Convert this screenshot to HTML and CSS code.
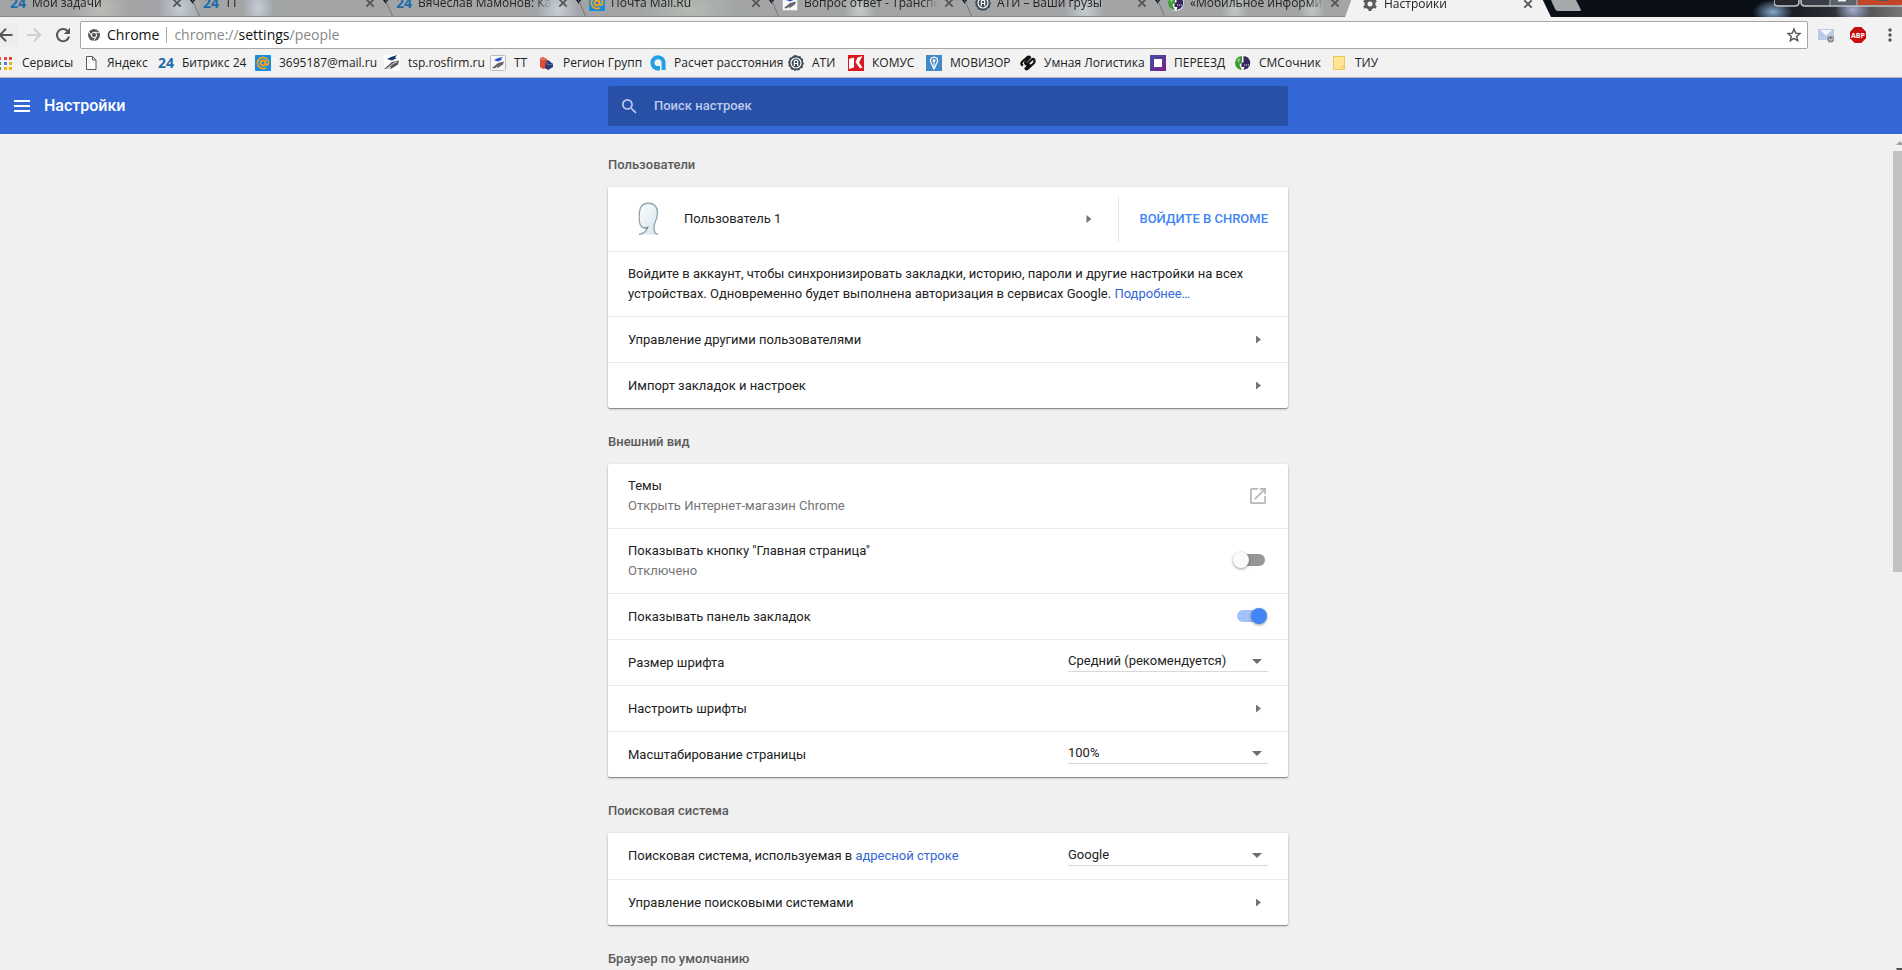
FILE: index.html
```html
<!DOCTYPE html>
<html lang="ru">
<head>
<meta charset="utf-8">
<title>Настройки</title>
<link rel="stylesheet" href="styles.css">
</head>
<body>
<svg class="defs" aria-hidden="true">
  <defs>
    <linearGradient id="g-blue" x1="0" y1="0" x2="1" y2="1"><stop offset="0" stop-color="#3f51a5"/><stop offset="1" stop-color="#7b1f8c"/></linearGradient>
    <linearGradient id="g-hair" x1="0" y1="0" x2="1" y2="1"><stop offset="0" stop-color="#ffffff"/><stop offset="1" stop-color="#d3e2ec"/></linearGradient>
    <symbol id="i-mail" viewBox="0 0 16 16"><rect width="16" height="16" rx="1" fill="#168de2"/><circle cx="8" cy="8" r="2.500" fill="none" stroke="#f8a31b" stroke-width="1.800"/><path d="M10.500 5.600v3.200c0 2 3.100 1.700 3.100-.8A5.600 5.600 0 1 0 11 12.700" fill="none" stroke="#f8a31b" stroke-width="1.700"/></symbol>
    <symbol id="i-road" viewBox="0 0 16 16"><rect width="16" height="16" fill="#fff"/><path d="M3 4l4-2 6-2-2 2.500 2 .5-5 2.500-2-.5z" fill="#153a76"/><path d="M0 14l8-7 7-1.500-1 4-8 5 1-3-4 2.500z" fill="#555"/><path d="M2 14l8-6 3-1" stroke="#fff" fill="none" stroke-width=".8"/></symbol>
    <symbol id="i-roadbox" viewBox="0 0 16 16"><rect x=".5" y=".5" width="15" height="15" rx="1" fill="#f8f8f8" stroke="#bbb"/><path d="M4 5l4-2 5-1-2 2 1 .8-4 1.700-1.500-.5z" fill="#2456cf"/><path d="M2 13l6-5 6-1.500-1 3-6 4 .5-2-3 2z" fill="#666"/></symbol>
    <symbol id="i-ati" viewBox="0 0 16 16"><path d="M8 0l2 1.200 2.300-.2.900 2.100 2 1.200-.4 2.300L16 8.500l-1.200 2-.1 2.300-2.300.7L11 15.400l-2.200-.3L7 16l-1.700-1.300L3 14.500l-.7-2.200L.5 11l.3-2.300L0 7l1.300-1.800.2-2.300 2.200-.7L5.500.5z" fill="#3c4a56"/><circle cx="8" cy="8" r="5" fill="none" stroke="#fff" stroke-width="1.200"/><path d="M6.300 11V6.800a1.700 1.700 0 0 1 3.400 0V11M6 8.500h4" fill="none" stroke="#fff" stroke-width="1.200"/></symbol>
    <symbol id="i-sms" viewBox="0 0 16 16"><circle cx="8" cy="8" r="7.800" fill="#fff"/><path d="M7 1A7 7 0 0 0 7 15L4.500 10 7 7z" fill="#3e9b35"/><path d="M2 5l3-2-1 5z" fill="#9fd08b"/><path d="M8.500 1a7 7 0 0 1 4 12.500L8.500 15l1-3h-3V7.500h2z" fill="#35265f"/><path d="M9 10h1.200M11 10h1.200M13 10h1" stroke="#fff"/></symbol>
    <symbol id="i-close" viewBox="0 0 10 10"><path d="M1.300 1.300l7.400 7.400M8.700 1.300L1.300 8.700" stroke="#555" stroke-width="1.800"/></symbol>
    <symbol id="i-edge" viewBox="0 0 14 17"><path d="M2 0l3 4 2-4z" fill="#0b1018"/><path d="M4.500 0l7 16" stroke="#777" fill="none"/></symbol>
  </defs>
</svg>

<div class="app">
  <div class="tabstrip">
    <button class="tab"><span class="b24">24</span><span class="tab-title">Мои задачи</span><svg class="tab-x"><use href="#i-close"/></svg><svg class="tab-edge"><use href="#i-edge"/></svg></button>
    <button class="tab"><span class="b24">24</span><span class="tab-title">ТТ</span><svg class="tab-x"><use href="#i-close"/></svg><svg class="tab-edge"><use href="#i-edge"/></svg></button>
    <button class="tab"><span class="b24">24</span><span class="tab-title">Вячеслав Мамонов: Календарь</span><svg class="tab-x"><use href="#i-close"/></svg><svg class="tab-edge"><use href="#i-edge"/></svg></button>
    <button class="tab"><svg class="fav"><use href="#i-mail"/></svg><span class="tab-title">Почта Mail.Ru</span><svg class="tab-x"><use href="#i-close"/></svg><svg class="tab-edge"><use href="#i-edge"/></svg></button>
    <button class="tab"><svg class="fav"><use href="#i-roadbox"/></svg><span class="tab-title">Вопрос ответ - Транспортная</span><svg class="tab-x"><use href="#i-close"/></svg><svg class="tab-edge"><use href="#i-edge"/></svg></button>
    <button class="tab"><svg class="fav"><use href="#i-ati"/></svg><span class="tab-title">АТИ – Ваши грузы</span><svg class="tab-x"><use href="#i-close"/></svg><svg class="tab-edge"><use href="#i-edge"/></svg></button>
    <button class="tab"><svg class="fav"><use href="#i-sms"/></svg><span class="tab-title">«Мобильное информирование</span><svg class="tab-x"><use href="#i-close"/></svg></button>
    <button class="tab tab-active"><svg class="fav" viewBox="0 0 16 16"><g fill="none" stroke="#5a5a5a"><circle cx="8" cy="8" r="4" stroke-width="3"/><path d="M8 1v3M8 12v3M1.900 4.500l2.600 1.500M11.500 10l2.600 1.500M1.900 11.500l2.600-1.500M11.500 6l2.600-1.500" stroke-width="3"/></g></svg><span class="tab-title">Настройки</span><svg class="tab-x"><use href="#i-close"/></svg></button>
    <div class="glass">
      <svg class="newtab" viewBox="0 0 40 17" role="img" aria-label="Новая вкладка"><path d="M0 0h25l5 10q0 1-1 1H7q-2 0-3-2z" fill="#a6a8ab"/></svg>
      <svg class="winbtns" viewBox="0 0 128 17" role="img" aria-label="Управление окном"><path d="M0 0v2q0 4 4 4h17q4 0 4-4V0" fill="#24272b" stroke="#c5c7ca" stroke-width="1.500"/><path d="M27 0v2q0 4 4 4h97V0" fill="#3a3d47" stroke="#c5c7ca" stroke-width="1.500"/><path d="M57 0h26v5H57z" fill="#59636b"/><path d="M84 0h44v5H84z" fill="#c2452a"/><path d="M56 0v6M83 0v6" stroke="#c5c7ca"/><path d="M64 0h8v1.500h-8z" fill="#eee"/><path d="M104 0h10v1h-10z" fill="#555"/></svg>
    </div>
  </div>

  <div class="toolbar">
    <button class="tool tool-back" aria-label="Назад"><svg width="16" height="16" viewBox="0 0 16 16"><path d="M15.500 8H3M9 1.800L2.800 8 9 14.200" fill="none" stroke="#555" stroke-width="2"/></svg></button>
    <button class="tool" aria-label="Вперёд"><svg width="16" height="16" viewBox="0 0 16 16"><path d="M1 8h13M8 1.800L14.200 8 8 14.200" fill="none" stroke="#cfcfcf" stroke-width="2"/></svg></button>
    <button class="tool" aria-label="Обновить"><svg width="16" height="16" viewBox="0 0 16 16"><path d="M12.600 4A6.100 6.100 0 1 0 14 9.500" fill="none" stroke="#555" stroke-width="2"/><path d="M15 .8v6.200H8.800z" fill="#555"/></svg></button>
    <div class="omnibox">
      <svg width="12" height="12" viewBox="0 0 12 12"><circle cx="6" cy="6" r="6" fill="#5a5a5a"/><circle cx="6" cy="6" r="2.600" fill="#5a5a5a" stroke="#fff"/><path d="M6 3.400h5.300M3.700 7.300L1.200 3M8.300 7.300L5.700 11.800" stroke="#fff" stroke-width=".9"/></svg>
      <span class="origin">Chrome</span>
      <span class="url">chrome://<b>settings</b>/people</span>
      <button class="bare star" aria-label="Добавить в закладки"><svg width="16" height="16" viewBox="0 0 16 16"><path d="M8 2l1.700 4.100 4.300.4-3.300 2.900 1 4.300L8 11.400l-3.700 2.300 1-4.300L2 6.500l4.300-.4z" fill="none" stroke="#555" stroke-width="1.400"/></svg></button>
    </div>
    <button class="bare" aria-label="Почта"><svg width="16" height="16" viewBox="0 0 16 16"><path d="M0 2h16v11H0z" fill="#bccae6"/><path d="M2 3h12L8 8.500z" fill="#f3f6fc"/><circle cx="12.700" cy="12.300" r="3.300" fill="#84878d"/><path d="M11 12l1.500 1.500L15 11.500" stroke="#eee" fill="none"/></svg></button>
    <button class="bare abp" aria-label="Adblock Plus"><svg width="16" height="16" viewBox="0 0 16 16"><path d="M4.700 0h6.600L16 4.700v6.600L11.300 16H4.700L0 11.300V4.700z" fill="#c70d0d"/><text x="8" y="11" text-anchor="middle" class="abp-text">ABP</text></svg></button>
    <button class="bare" aria-label="Меню"><svg width="4" height="14" viewBox="0 0 4 14"><g fill="#555"><circle cx="2" cy="2" r="1.700"/><circle cx="2" cy="7" r="1.700"/><circle cx="2" cy="12" r="1.700"/></g></svg></button>
  </div>

  <nav class="bookmarks">
    <a href="#"><svg class="fav" viewBox="0 0 16 16"><path d="M2 2h1v3H2zM6 2h3v3H6zM11 2h3v3h-3z" fill="#e8453c"/><path d="M2 7h1v3H2z" fill="#3a9a55"/><path d="M6 7h3v3H6z" fill="#3f83f1"/><path d="M11 7h3v3h-3z" fill="#f4b400"/><path d="M2 12h1v3H2z" fill="#3a9a55"/><path d="M6 12h3v3H6zM11 12h3v3h-3z" fill="#f4b400"/></svg>Сервисы</a>
    <a href="#"><svg class="fav" viewBox="0 0 16 16"><path d="M3.500 1.500h6l3.500 3.500v9.500H3.500zM9.500 1.500V5H13" fill="#fff" stroke="#5a5a5a"/></svg>Яндекс</a>
    <a href="#"><span class="b24">24</span>Битрикс 24</a>
    <a href="#"><svg class="fav"><use href="#i-mail"/></svg>3695187@mail.ru</a>
    <a href="#"><svg class="fav"><use href="#i-road"/></svg>tsp.rosfirm.ru</a>
    <a href="#"><svg class="fav"><use href="#i-roadbox"/></svg>ТТ</a>
    <a href="#"><svg class="fav" viewBox="0 0 16 16"><path d="M1 3l3-1 4 2v9l-4 1-3-2z" fill="#de4b36"/><path d="M1 3l3 1.500L8 4" stroke="#f08a78" fill="none"/><path d="M7 6l2-1 5 4v3l-5 3-3-2z" fill="#263a70"/><path d="M7 6l2 4 5-1" stroke="#6576a5" fill="none"/></svg>Регион Групп</a>
    <a href="#"><svg class="fav" viewBox="0 0 16 16"><path d="M8 13.400A5.600 5.600 0 1 1 13.600 8v7" fill="none" stroke="#21a0e3" stroke-width="4"/><path d="M7 11h3v4.500H7z" fill="#21a0e3"/></svg>Расчет расстояния</a>
    <a href="#"><svg class="fav"><use href="#i-ati"/></svg>АТИ</a>
    <a href="#"><svg class="fav" viewBox="0 0 16 16"><path d="M0 0h16v16H0z" fill="#dd1720"/><path d="M1 4l5-1.500v10L1 14zM7.500 7l2-4.500L14.500 1l-3.500 6.500 3.500 5-2.500 1-3.500-5z" fill="#fff"/></svg>КОМУС</a>
    <a href="#"><svg class="fav" viewBox="0 0 16 16"><path d="M0 0h16v16H0z" fill="#4189c7"/><path d="M8 14L4.500 6.500a3.600 3.600 0 1 1 7 0z" fill="none" stroke="#fff" stroke-width="1.200"/><circle cx="8" cy="5.500" r="1.500" fill="#fff"/><path d="M8 7v5" stroke="#fff"/></svg>МОВИЗОР</a>
    <a href="#"><svg class="fav" viewBox="0 0 16 16"><path d="M3 10.500Q0 9 2.500 6.500L7 2.500Q9 1 10 2.500L5.500 7Q4.500 8.500 6.500 9.500L12 4.500Q14 3 14.500 5.500Q15 7 13 9L8 13.500Q6 15 5.500 13.500L10 9" fill="none" stroke="#111" stroke-width="2.300" stroke-linejoin="round"/></svg>Умная Логистика</a>
    <a href="#"><svg class="fav" viewBox="0 0 16 16"><path d="M0 0h16v16H0z" fill="url(#g-blue)"/><path d="M4 4h8v8H4z" fill="#fff"/></svg>ПЕРЕЕЗД</a>
    <a href="#"><svg class="fav"><use href="#i-sms"/></svg>СМСочник</a>
    <a href="#"><svg class="fav" viewBox="0 0 16 16"><path d="M2.500 1.500h11v13h-11z" fill="#ffe594" stroke="#f0c851"/><path d="M11.500 10.500h2v4h-2z" fill="#ffe594" stroke="#f0c851"/></svg>ТИУ</a>
  </nav>

  <header class="header">
    <div class="brand">
      <button class="bare" aria-label="Главное меню"><svg width="16" height="12" viewBox="0 0 16 12"><path d="M0 0h16v2H0zM0 5h16v2H0zM0 10h16v2H0z" fill="#fff"/></svg></button>
      <h1>Настройки</h1>
    </div>
    <label class="search">
      <svg width="15" height="15" viewBox="3 3 18 18"><path d="M15.500 14h-.79l-.28-.27A6.470 6.470 0 0 0 16 9.500 6.500 6.500 0 1 0 9.500 16c1.610 0 3.090-.59 4.230-1.570l.27.28v.79l5 4.990L20.490 19l-4.990-5zm-6 0C7.010 14 5 11.990 5 9.500S7.010 5 9.500 5 14 7.010 14 9.500 11.990 14 9.500 14z" fill="#bccbec"/></svg>
      <input type="search" placeholder="Поиск настроек" aria-label="Поиск настроек">
    </label>
  </header>

  <div class="body">
    <main class="content">
      <section>
        <h2>Пользователи</h2>
        <div class="card">
          <div class="row row-tall">
            <button class="profile">
              <svg class="avatar" viewBox="0 0 40 40"><path d="M11 35.500c4-1 8-2.500 7.500-6.500-4 .5-6.500-2-7-6C10.800 16 11 10 14 6.500c3-3 10-3 13 0 3 3.500 3 8 1.500 13-1.500 4-2.500 6-2.500 9.500 0 3.500 1.500 6 4 6.500" fill="url(#g-hair)" stroke="#8fa3b1" stroke-width="1.300"/><path d="M13 26.500c2 2.500 5 2.500 8 .5l-3 6c1-2 1-3 .5-4-2 .3-4-.7-5.500-2.500z" fill="#6f8796"/></svg>
              <span class="label">Пользователь 1</span>
              <span class="arrow"></span>
            </button>
            <button class="signin">ВОЙДИТЕ В CHROME</button>
          </div>
          <div class="row row-tall">
            <p>Войдите в аккаунт, чтобы синхронизировать закладки, историю, пароли и другие настройки на всех устройствах. Одновременно будет выполнена авторизация в сервисах Google. <a href="#">Подробнее…</a></p>
          </div>
          <button class="row"><span class="label">Управление другими пользователями</span><span class="arrow"></span></button>
          <button class="row"><span class="label">Импорт закладок и настроек</span><span class="arrow"></span></button>
        </div>
      </section>

      <section>
        <h2>Внешний вид</h2>
        <div class="card">
          <button class="row row-tall"><span class="label">Темы<small>Открыть Интернет-магазин Chrome</small></span>
            <svg class="open" width="16" height="16" viewBox="3 3 18 18"><path d="M19 19H5V5h7V3H5a2 2 0 0 0-2 2v14a2 2 0 0 0 2 2h14c1.100 0 2-.9 2-2v-7h-2v7zM14 3v2h3.590l-9.830 9.830 1.410 1.410L19 6.410V10h2V3h-7z" fill="#b8b8b8"/></svg></button>
          <label class="row row-tall"><span class="label">Показывать кнопку "Главная страница"<small>Отключено</small></span><input type="checkbox" class="toggle"></label>
          <label class="row"><span class="label">Показывать панель закладок</span><input type="checkbox" class="toggle" checked></label>
          <div class="row"><label class="label" for="font-size">Размер шрифта</label><span class="select"><select id="font-size"><option>Средний (рекомендуется)</option></select></span></div>
          <button class="row"><span class="label">Настроить шрифты</span><span class="arrow"></span></button>
          <div class="row"><label class="label" for="zoom">Масштабирование страницы</label><span class="select"><select id="zoom"><option>100%</option></select></span></div>
        </div>
      </section>

      <section>
        <h2>Поисковая система</h2>
        <div class="card">
          <div class="row row-select"><label class="label" for="engine">Поисковая система, используемая в <a href="#">адресной строке</a></label><span class="select"><select id="engine"><option>Google</option></select></span></div>
          <button class="row"><span class="label">Управление поисковыми системами</span><span class="arrow"></span></button>
        </div>
      </section>

      <section>
        <h2>Браузер по умолчанию</h2>
      </section>
    </main>
    <div class="scrollbar" aria-hidden="true">
      <svg class="sb-arrow" viewBox="0 0 9 17"><path d="M3 11l4-4 4 4z" fill="#a3a3a3"/></svg>
      <div class="sb-thumb"></div>
      <div class="sb-rest"></div>
      <svg class="sb-arrow" viewBox="0 0 9 17"><path d="M3 15h6v2H4z" fill="#505050"/></svg>
    </div>
  </div>
</div>
</body>
</html>
```
FILE: styles.css
```css
* { box-sizing: border-box; }
body {
  margin: 0;
  font: 13px/20px Roboto, "Liberation Sans", sans-serif;
  color: #222;
  background: #f0f0f0;
}
button { font: inherit; color: inherit; border: 0; padding: 0; background: none; text-align: left; }
svg { display: block; flex: none; }
a { color: #3367d6; text-decoration: none; }
h1, h2, p { margin: 0; }
.defs { position: absolute; width: 0; height: 0; }
.app { display: flex; flex-direction: column; height: 100vh; overflow: hidden; }
.fav { width: 16px; height: 16px; }
.b24 { flex: none; width: 16px; font: bold 14px/16px "Open Sans", sans-serif; color: #1d6cab; }

/* tab strip, cut by the top of the screen */
.tabstrip {
  display: flex;
  flex: none;
  align-items: flex-end;
  height: 17px;
  overflow: hidden;
  background:
    radial-gradient(ellipse 22px 26px at 180px 8px, #c3ccd6, transparent),
    radial-gradient(ellipse 16px 26px at 258px 8px, #c3ccd6, transparent),
    radial-gradient(ellipse 30px 26px at 100px 10px, #bcbdb8, transparent),
    radial-gradient(ellipse 22px 26px at 558px 10px, #c6ced8, transparent),
    radial-gradient(ellipse 50px 26px at 690px 10px, #b3bbb2, transparent),
    radial-gradient(ellipse 16px 26px at 860px 10px, #c3cbc6, transparent),
    radial-gradient(ellipse 20px 26px at 1085px 10px, #c3cbcf, transparent),
    radial-gradient(ellipse 14px 26px at 1235px 10px, #c0c6c3, transparent),
    radial-gradient(ellipse 14px 26px at 1312px 10px, #c0c6c3, transparent),
    #a2a4a6;
}
.tab {
  position: relative;
  display: flex;
  flex: 0 1 193px;
  align-items: center;
  gap: 6px;
  min-width: 0;
  height: 27px;
  padding: 0 11px 0 10px;
  border-bottom: 1px solid #888;
  font: 12px/16px "Open Sans", sans-serif;
}
.tab-title {
  flex: 1;
  overflow: hidden;
  white-space: nowrap;
  color: #222;
  mask-image: linear-gradient(to left, transparent, #000 16px);
}
.tab-x { width: 10px; height: 10px; }
.tab-edge { position: absolute; right: -9px; bottom: -1px; width: 14px; height: 17px; }
.tab-active {
  z-index: 1;
  flex: 0 1 206px;
  margin-left: -6px;
  padding: 0 18px 0 17px;
  border-bottom: 0;
  background: #f2f2f2;
  clip-path: polygon(5px 0, 193px 0, 206px 100%, 0 100%, 6px 40%);
}
.glass {
  display: flex;
  flex: 1;
  justify-content: space-between;
  height: 17px;
  margin-left: -10px;
  background:
    radial-gradient(ellipse 20px 12px at 232px 12px, #86a9cc, transparent),
    radial-gradient(ellipse 18px 14px at 312px 10px, #a3aed4, transparent),
    linear-gradient(to right, #0b1018 60%, #2a2e33 80%, #777);
}
.newtab { width: 40px; height: 17px; margin-left: 10px; }
.winbtns { width: 128px; height: 17px; }

/* toolbar */
.toolbar { display: flex; flex: none; align-items: center; height: 36px; padding-right: 10px; background: #f2f2f2; }
.bare { display: flex; }
.tool { display: flex; align-items: center; justify-content: center; width: 29px; height: 24px; }
.tool-back { justify-content: flex-end; width: 18px; padding-right: 5px; margin-right: 1px; background: #ededed; border-radius: 2px; }
.omnibox {
  display: flex;
  flex: 1;
  align-items: center;
  height: 28px;
  margin: 0 10px 0 3px;
  padding: 0 5px 0 7px;
  border: 1px solid #a6a6a6;
  border-radius: 2px;
  background: #fff;
  font: 14px/20px "Open Sans", sans-serif;
}
.origin { margin-left: 7px; padding-right: 7px; border-right: 1px solid #aaa; line-height: 16px; color: #111; }
.url { margin-left: 7px; color: #888; }
.url b { font-weight: normal; color: #111; }
.star { margin-left: auto; }
.abp { margin: 0 22px 0 16px; }
.abp-text { font: bold 7px "Open Sans", sans-serif; fill: #fff; }

/* bookmarks bar */
.bookmarks {
  display: grid;
  flex: none;
  grid-template-columns: 85px 75px 97px 129px 106px 49px 111px 138px 60px 78px 94px 130px 85px 96px 60px;
  align-items: center;
  height: 25px;
  padding-bottom: 4px;
  border-bottom: 1px solid #b5b5b5;
  background: #f2f2f2;
}
.bookmarks a { display: flex; gap: 8px; margin-left: -2px; font: 12px/16px "Open Sans", sans-serif; color: #222; white-space: nowrap; }

/* settings header */
.header {
  display: grid;
  flex: none;
  grid-template-columns: 1fr minmax(0, 680px) 1fr;
  align-items: center;
  height: 56px;
  padding-right: 6px;
  background: #3367d6;
}
.brand { display: flex; align-items: center; gap: 14px; padding-left: 14px; }
.brand h1 { font-size: 16px; font-weight: 500; color: #fff; }
.search { display: flex; align-items: center; gap: 17px; height: 40px; padding: 0 14px; border-radius: 2px; background: #2850a7; }
.search input { flex: 1; padding: 0; border: 0; outline: 0; background: none; font: 500 13px/20px Roboto, sans-serif; color: #fff; appearance: none; }
.search input::placeholder { color: #bccbec; opacity: 1; }

/* settings page */
.body { display: flex; flex: 1; min-height: 0; }
.content { flex: 1; padding: 0 0 24px 3px; overflow-y: auto; scrollbar-width: none; }
section { width: 100%; max-width: 680px; margin: 0 auto; }
h2 { padding: 24px 0 12px; font-size: 13px; font-weight: 500; line-height: 20px; color: #5a5a5a; }
section:first-child h2 { padding-top: 21px; }
.card { display: flow-root; border-radius: 2px; background: #fff; box-shadow: 0 1px 1px rgba(0, 0, 0, .35), 0 1px 3px rgba(0, 0, 0, .2); }
.row { display: flex; align-items: center; width: 100%; min-height: 46px; padding: 0 20px; border-top: 1px solid #ebebeb; }
.row-tall { min-height: 65px; }
.row-select { min-height: 47px; }
.row:first-child { border-top-color: transparent; margin-top: -1px; }
.label { flex: 1; }
.label small { display: block; font-size: 13px; color: #757575; }
.arrow { width: 5px; height: 8px; margin-right: 7px; background: #757575; clip-path: polygon(0 0, 100% 50%, 0 100%); }
.profile { display: flex; flex: 1; align-items: center; height: 46px; border-right: 1px solid #e4e4e4; padding-right: 20px; }
.avatar { width: 40px; height: 40px; margin-right: 16px; }
.signin { padding-left: 20px; font-weight: 500; color: #4285f4; }
.open { margin-right: 2px; }
.select { position: relative; width: 200px; margin-bottom: 3px; }
.row-select .select { margin-bottom: 2px; }
.select::after {
  content: "";
  position: absolute;
  right: 6px;
  top: 9px;
  width: 10px;
  height: 5px;
  background: #6e6e6e;
  clip-path: polygon(0 0, 100% 0, 50% 100%);
  pointer-events: none;
}
.select select {
  display: block;
  width: 100%;
  height: 22px;
  padding: 0 24px 0 0;
  border: 0;
  border-bottom: 1px solid #d9d9d9;
  border-radius: 0;
  outline: 0;
  appearance: none;
  background: none;
  font: inherit;
  color: inherit;
}
.toggle { position: relative; width: 28px; height: 12px; margin: 0 3px 2px 0; border-radius: 6px; appearance: none; background: #969696; }
.toggle::before {
  content: "";
  position: absolute;
  left: -4px;
  top: -2px;
  width: 16px;
  height: 16px;
  border-radius: 50%;
  background: #fafafa;
  box-shadow: 0 1px 3px rgba(0, 0, 0, .4);
}
.toggle:checked { background: #a0c2f9; }
.toggle:checked::before { left: 14px; background: #4285f4; }

.scrollbar { display: flex; flex-direction: column; width: 9px; }
.sb-arrow { width: 9px; height: 17px; }
.sb-thumb { flex: 21; background: #c1c1c1; }
.sb-rest { flex: 19; }
```
